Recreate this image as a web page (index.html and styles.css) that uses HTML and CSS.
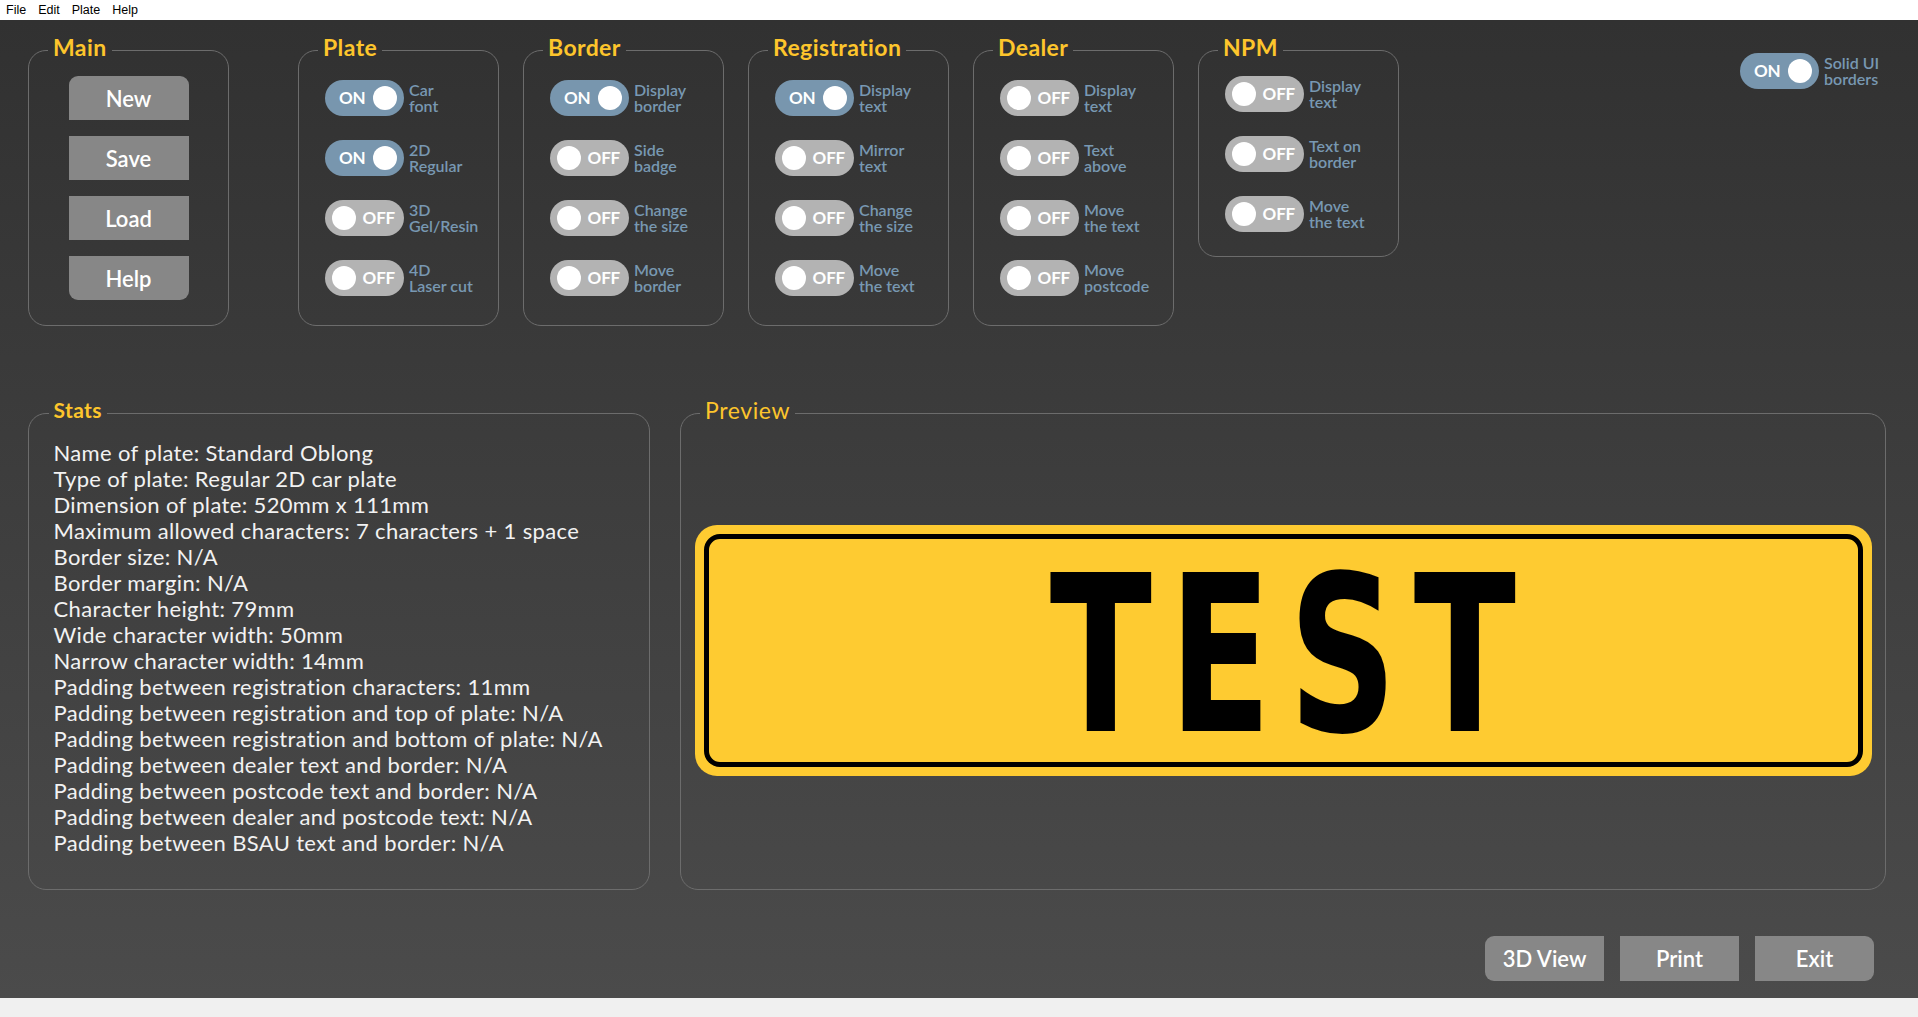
FILE: index.html
```html
<!DOCTYPE html>
<html>
<head>
<meta charset="utf-8">
<link rel="stylesheet" href="styles.css">
</head>
<body>
<div class="menubar"><span>File</span><span>Edit</span><span>Plate</span><span>Help</span></div>
<div class="app">
  <div class="top-row">
    <fieldset class="group group-main">
      <legend>Main</legend>
      <div class="main-body">
        <button class="btn btn-top">New</button>
        <button class="btn">Save</button>
        <button class="btn">Load</button>
        <button class="btn btn-bottom">Help</button>
      </div>
    </fieldset>
    <fieldset class="group">
      <legend>Plate</legend>
      <div class="rows">
        <div class="opt"><div class="toggle on"><span class="tt">ON</span><span class="knob"></span></div><div class="opt-label">Car<br>font</div></div>
        <div class="opt"><div class="toggle on"><span class="tt">ON</span><span class="knob"></span></div><div class="opt-label">2D<br>Regular</div></div>
        <div class="opt"><div class="toggle off"><span class="knob"></span><span class="tt">OFF</span></div><div class="opt-label">3D<br>Gel/Resin</div></div>
        <div class="opt"><div class="toggle off"><span class="knob"></span><span class="tt">OFF</span></div><div class="opt-label">4D<br>Laser cut</div></div>
      </div>
    </fieldset>
    <fieldset class="group">
      <legend>Border</legend>
      <div class="rows">
        <div class="opt"><div class="toggle on"><span class="tt">ON</span><span class="knob"></span></div><div class="opt-label">Display<br>border</div></div>
        <div class="opt"><div class="toggle off"><span class="knob"></span><span class="tt">OFF</span></div><div class="opt-label">Side<br>badge</div></div>
        <div class="opt"><div class="toggle off"><span class="knob"></span><span class="tt">OFF</span></div><div class="opt-label">Change<br>the size</div></div>
        <div class="opt"><div class="toggle off"><span class="knob"></span><span class="tt">OFF</span></div><div class="opt-label">Move<br>border</div></div>
      </div>
    </fieldset>
    <fieldset class="group">
      <legend>Registration</legend>
      <div class="rows">
        <div class="opt"><div class="toggle on"><span class="tt">ON</span><span class="knob"></span></div><div class="opt-label">Display<br>text</div></div>
        <div class="opt"><div class="toggle off"><span class="knob"></span><span class="tt">OFF</span></div><div class="opt-label">Mirror<br>text</div></div>
        <div class="opt"><div class="toggle off"><span class="knob"></span><span class="tt">OFF</span></div><div class="opt-label">Change<br>the size</div></div>
        <div class="opt"><div class="toggle off"><span class="knob"></span><span class="tt">OFF</span></div><div class="opt-label">Move<br>the text</div></div>
      </div>
    </fieldset>
    <fieldset class="group">
      <legend>Dealer</legend>
      <div class="rows">
        <div class="opt"><div class="toggle off"><span class="knob"></span><span class="tt">OFF</span></div><div class="opt-label">Display<br>text</div></div>
        <div class="opt"><div class="toggle off"><span class="knob"></span><span class="tt">OFF</span></div><div class="opt-label">Text<br>above</div></div>
        <div class="opt"><div class="toggle off"><span class="knob"></span><span class="tt">OFF</span></div><div class="opt-label">Move<br>the text</div></div>
        <div class="opt"><div class="toggle off"><span class="knob"></span><span class="tt">OFF</span></div><div class="opt-label">Move<br>postcode</div></div>
      </div>
    </fieldset>
    <fieldset class="group group-npm">
      <legend>NPM</legend>
      <div class="rows rows-npm">
        <div class="opt"><div class="toggle off"><span class="knob"></span><span class="tt">OFF</span></div><div class="opt-label">Display<br>text</div></div>
        <div class="opt"><div class="toggle off"><span class="knob"></span><span class="tt">OFF</span></div><div class="opt-label">Text on<br>border</div></div>
        <div class="opt"><div class="toggle off"><span class="knob"></span><span class="tt">OFF</span></div><div class="opt-label">Move<br>the text</div></div>
      </div>
    </fieldset>
    <div class="opt opt-global"><div class="toggle on"><span class="tt">ON</span><span class="knob"></span></div><div class="opt-label">Solid UI<br>borders</div></div>
  </div>

  <div class="mid-row">
    <fieldset class="panel stats">
      <legend class="legend-stats">Stats</legend>
      <div class="stats-body">
        <div>Name of plate: Standard Oblong</div>
        <div>Type of plate: Regular 2D car plate</div>
        <div>Dimension of plate: 520mm x 111mm</div>
        <div>Maximum allowed characters: 7 characters + 1 space</div>
        <div>Border size: N/A</div>
        <div>Border margin: N/A</div>
        <div>Character height: 79mm</div>
        <div>Wide character width: 50mm</div>
        <div>Narrow character width: 14mm</div>
        <div>Padding between registration characters: 11mm</div>
        <div>Padding between registration and top of plate: N/A</div>
        <div>Padding between registration and bottom of plate: N/A</div>
        <div>Padding between dealer text and border: N/A</div>
        <div>Padding between postcode text and border: N/A</div>
        <div>Padding between dealer and postcode text: N/A</div>
        <div>Padding between BSAU text and border: N/A</div>
      </div>
    </fieldset>
    <fieldset class="panel preview">
      <legend class="legend-preview">Preview</legend>
      <div class="preview-body">
        <div class="plate">
          <div class="plate-inner">
            <div class="reg">TEST</div>
          </div>
        </div>
      </div>
    </fieldset>
  </div>

  <div class="bottom-row">
    <button class="btn btn-left">3D View</button>
    <button class="btn">Print</button>
    <button class="btn btn-right">Exit</button>
  </div>
</div>
<div class="statusbar"></div>
</body>
</html>
```

FILE: styles.css
```css
* { box-sizing: border-box; }

html, body {
  margin: 0;
  height: 100%;
  overflow: hidden;
}

body {
  font-family: Lato, "Open Sans", sans-serif;
  background: #f0f0f0;
}

.menubar {
  height: 20px;
  background: #ffffff;
  display: flex;
  align-items: center;
  font: 12.5px/20px "Liberation Sans", Arial, sans-serif;
  color: #000;
}

.menubar span { padding: 0 6px; }

.app {
  height: 978px;
  background: linear-gradient(#313131, #4b4b4b);
  padding: 15px 32px 0 28px;
  display: flex;
  flex-direction: column;
  overflow: hidden;
}

/* ---------- top row ---------- */
.top-row {
  display: flex;
  align-items: flex-start;
}

fieldset {
  margin: 0;
  padding: 0;
  min-width: 0;
  border: 1.5px solid #6c6c6c;
  border-radius: 18px;
}

legend {
  margin-left: 19px;
  padding: 0 5px 6px;
  font-family: Lato, sans-serif;
  font-weight: bold;
  font-size: 23px;
  line-height: 24px;
  color: #fdc52c;
  letter-spacing: 0.4px;
}

.group {
  width: 201px;
  flex: none;
}

.group + .group { margin-left: 24px; }
.group-main { margin-right: 45px; }

.main-body {
  display: flex;
  flex-direction: column;
  align-items: center;
  gap: 16px;
  padding: 11px 0 25px;
}

.btn {
  border: none;
  margin: 0;
  padding: 0;
  width: 120px;
  height: 44px;
  background: #878787;
  color: #ffffff;
  font-family: Lato, sans-serif;
  font-weight: 600;
  font-size: 22px;
  border-radius: 0;
}

.btn-top { border-radius: 9px 9px 0 0; }
.btn-bottom { border-radius: 0 0 9px 9px; }

.rows {
  display: flex;
  flex-direction: column;
  gap: 24px;
  padding: 15px 0 29px 26px;
}

.rows-npm { padding: 11px 0 24px 26px; }

.opt {
  display: flex;
  align-items: center;
}

.toggle {
  width: 79px;
  height: 36px;
  border-radius: 18px;
  display: flex;
  align-items: center;
  justify-content: space-between;
  flex: none;
}

.toggle.on {
  background: #7896ae;
  padding: 0 7px 0 14px;
}

.toggle.off {
  background: #b3b3b3;
  padding: 0 9px 0 7px;
}

.knob {
  width: 24px;
  height: 24px;
  border-radius: 50%;
  background: #ffffff;
}

.tt {
  color: #ffffff;
  font-family: Lato, sans-serif;
  font-weight: bold;
  font-size: 17px;
  line-height: 20px;
  letter-spacing: -0.2px;
}

.opt-label {
  margin-left: 5px;
  color: #7898b2;
  font-family: Lato, sans-serif;
  font-weight: 600;
  font-size: 16px;
  line-height: 16px;
  white-space: nowrap;
}

.opt-global {
  margin-left: auto;
  margin-top: 18px;
  width: 146px;
}

/* ---------- middle row ---------- */
.mid-row {
  display: flex;
  gap: 30px;
  margin-top: 72px;
}

.panel { flex: none; }

.stats { width: 622px; }
.preview { flex: 1; }

.legend-stats {
  margin-left: 19.5px;
  font-size: 21px;
}

.legend-preview {
  font-weight: normal;
  letter-spacing: 0.6px;
}

.stats-body {
  padding: 12px 0 33px 24.5px;
  color: #f2f2f2;
  font-family: Lato, sans-serif;
  font-size: 22px;
  letter-spacing: 0.35px;
  line-height: 26px;
  white-space: nowrap;
}

.preview-body {
  padding: 97px 13.5px 0;
}

.plate {
  height: 251px;
  background: #fecb31;
  border-radius: 22px;
  padding: 9px;
}

.plate-inner {
  height: 100%;
  border: 5px solid #000;
  border-radius: 16px;
  display: flex;
  align-items: center;
  justify-content: center;
}

.reg {
  font-family: "DejaVu Sans", sans-serif;
  font-weight: bold;
  font-size: 217px;
  line-height: 1;
  letter-spacing: 25px;
  padding: 12px 0 0 25px;
  color: #000;
  white-space: nowrap;
  transform: scaleX(0.69);
}

/* ---------- bottom row ---------- */
.bottom-row {
  display: flex;
  justify-content: flex-end;
  gap: 16px;
  margin-top: 46px;
  margin-right: 12px;
}

.bottom-row .btn {
  width: 119px;
  height: 45px;
}

.btn-left { border-radius: 9px 0 0 9px; }
.btn-right { border-radius: 0 9px 9px 0; }

.statusbar {
  height: 19px;
  background: #f0f0f0;
}
```
